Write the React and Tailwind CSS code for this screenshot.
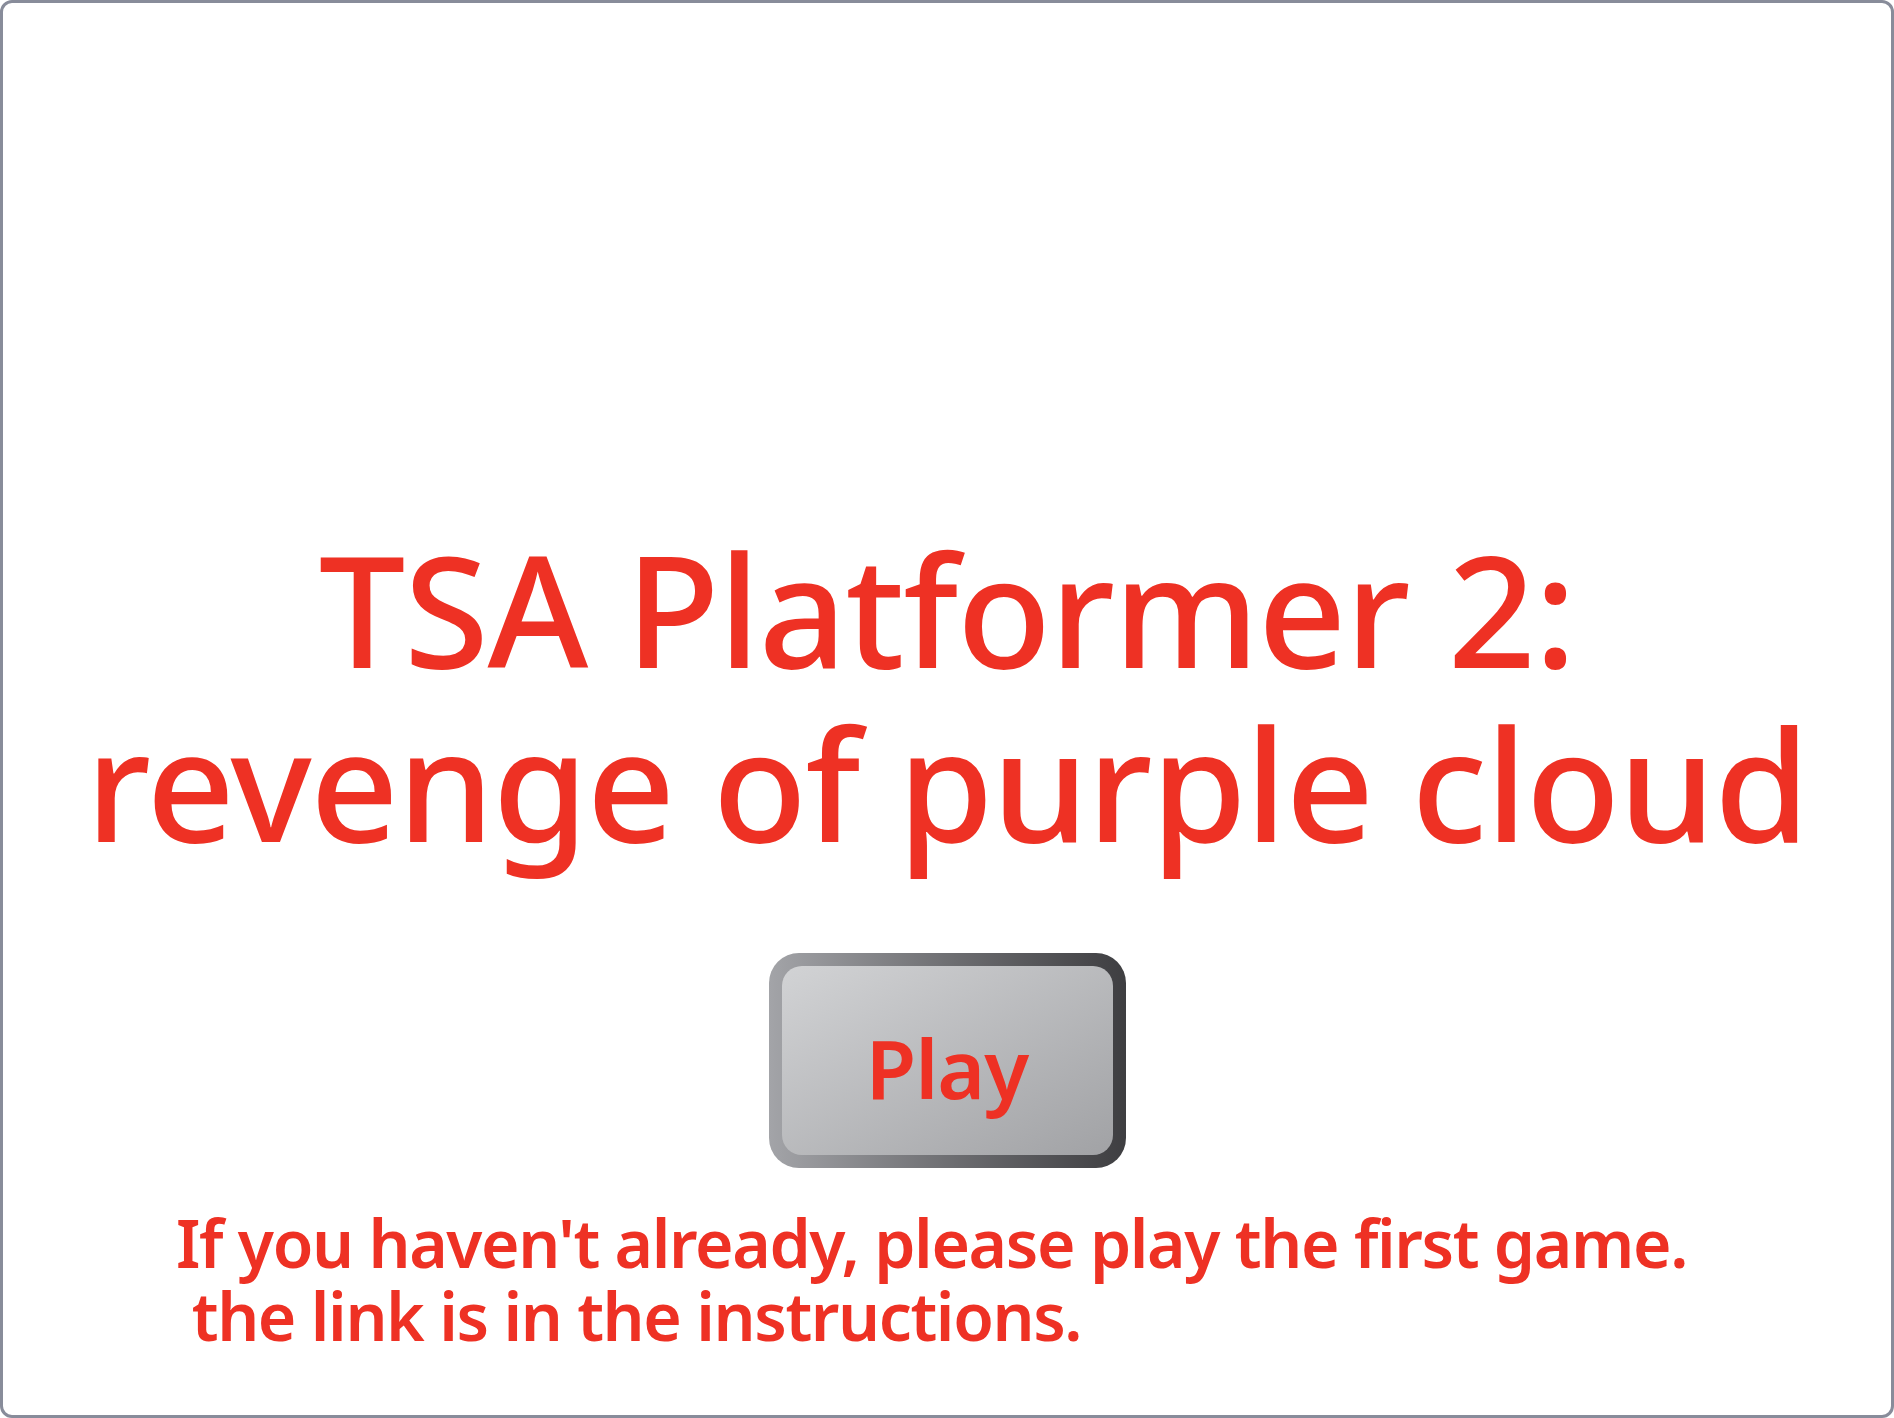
import React from 'react';

export default function App() {
  return (
    <div className="w-[1894px] h-[1418px] bg-white border-[3px] border-[#888c9a] rounded-[12px] overflow-hidden font-['Noto_Sans',sans-serif] text-[#ee3124]">
      {/* Title */}
      <div className="pt-[518px] text-center text-[154px] leading-[174px] font-medium tracking-[-1.3px]">
        <div>TSA Platformer 2:</div>
        <div>revenge of purple cloud</div>
      </div>

      {/* Play button */}
      <div className="mt-[84px] flex justify-center">
        <div className="w-[357px] h-[215px] p-[13px] rounded-[30px] bg-gradient-to-r from-[#a3a4a8] to-[#3e3e41]">
          <div className="w-full h-full rounded-[20px] bg-gradient-to-br from-[#d2d3d5] to-[#a1a2a5] flex items-center justify-center">
            <span className="text-[82px] leading-none font-semibold tracking-[-1px] pt-[12px]">Play</span>
          </div>
        </div>
      </div>

      {/* Note */}
      <div className="mt-[38px] pl-[173px] text-[66px] leading-[73px] font-semibold tracking-[-1.4px] whitespace-pre">
        <div>If you haven't already, please play the first game.</div>
        <div> the link is in the instructions.</div>
      </div>
    </div>
  );
}
